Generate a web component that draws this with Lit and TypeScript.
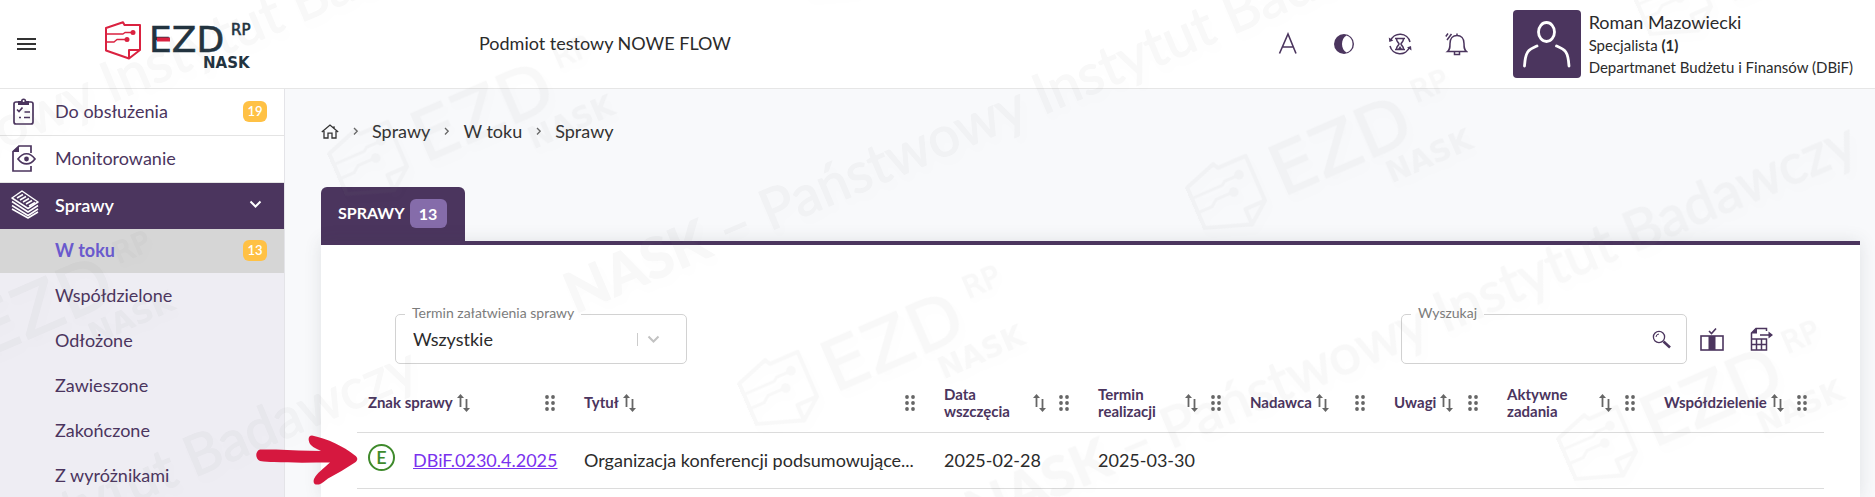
import { LitElement, html, svg, css } from "lit";
import { customElement, property } from "lit/decorators.js";
import { classMap } from "lit/directives/class-map.js";

/* ---------- brand mark ---------- */

const emblem = (mono: boolean) => {
  const red = mono ? "#808080" : "#da2240";
  return svg`
    <g fill="none" stroke=${red} stroke-width="2" stroke-linejoin="round">
      <path d="M1 7 L18 1.200 L19.500 4 L35 4 L35 29 L24 37.500 L1 29.500 Z"/>
      <path d="M24 37 V29 H34.500"/>
      <path d="M1 13 H18 L20 11.500 H27 M1 21 H9 L12 18.500 H21" stroke-width="1.500"/>
      <circle cx="28" cy="11.500" r="1.500" fill=${red}/>
      <circle cx="22" cy="18.500" r="1.500" fill=${red}/>
    </g>`;
};

const brand = (mono: boolean) => {
  const ink = mono ? "#808080" : "#22333f";
  return svg`
    ${emblem(mono)}
    <g fill=${ink} font-family="'DejaVu Sans', Verdana, sans-serif">
      <text x="44" y="31" font-size="36" stroke=${ink} stroke-width=".6">EZD</text>
      <text x="126" y="14" font-size="15" stroke=${ink} stroke-width=".6">RP</text>
      <text x="98" y="47" font-size="15" font-weight="700">NASK</text>
    </g>`;
};

/* ---------- icons ---------- */

const icons = {
  menu: svg`<path d="M0 2h19M0 7h19M0 12h19" stroke="#333" stroke-width="1.800"/>`,
  clipboard: svg`<g fill="none" stroke="currentColor" stroke-width="1.700">
      <rect x="3" y="5" width="19" height="22" rx="2"/>
      <path d="M6 12.500l2 2 3.500-4M13.500 15H19M8 20.500h2M13 20.500h6"/></g>
    <path d="M7 4h3a2.600 2.600 0 0 1 5.200 0H18v4H7z" fill="currentColor"/>
    <circle cx="12.600" cy="4" r="1" fill="#fff"/>`,
  monitor: svg`<g fill="none" stroke="currentColor" stroke-width="1.700">
      <path d="M20 9V2H8L2 7.500V27h18v-5"/>
      <path d="M7 15c5-7 12-7 17 0-5 6.500-12 6.500-17 0z"/></g>
    <circle cx="15.500" cy="15" r="2.400" fill="currentColor"/><path d="M8 1.500V8H1.500z" fill="currentColor"/>`,
  stack: svg`<g fill="none" stroke="currentColor" stroke-width="1.500" stroke-linejoin="round">
      <path d="M11 1L27 12 17 18.500 1 8z"/>
      <path d="M6 8l6-3.500M9 10l6-3.500M12 12l6-3.500M15 14l6-3.500M18 16l6-3.500" stroke-width="1.600"/>
      <path d="M1 11.500L17 22l10-6.500M1 15.500L17 25.500l10-6.500M1 19l16 9 10-6"/></g>`,
  chevronDown: svg`<path d="M1.500 1.500l5 5 5-5" fill="none" stroke="currentColor" stroke-width="2"/>`,
  chevronRight: svg`<path d="M1 1l3.200 3.200L1 7.500" fill="none" stroke="#666" stroke-width="1.300"/>`,
  home: svg`<path d="M.8 8L9 1l8.200 7M3 7v7h4V9.200h4V14h4V7M13 2.200V4" fill="none" stroke="#333" stroke-width="1.300"/>`,
  letter: svg`<path d="M3.500 21.500L12 2l8 19.500M6.500 15h11" fill="none" stroke="currentColor" stroke-width="1.600"/>`,
  contrast: svg`<circle cx="12" cy="12" r="10" fill="currentColor"/><path d="M14.500 3.500a9 9 0 0 1 0 17c-6-3-6-14 0-17z" fill="#fff"/>`,
  session: svg`<g fill="none" stroke="currentColor" stroke-width="1.500">
      <path d="M2.500 9A10.200 10.200 0 0 1 22 10M21.500 15A10.200 10.200 0 0 1 2 14"/>
      <path d="M7 6.500h10M7 17.500h10M8.500 6.500c0 4 2.500 4 2.500 5.500s-2.500 1.500-2.500 5.500M15.500 6.500c0 4-2.500 4-2.500 5.500s2.500 1.500 2.500 5.500"/></g>
    <path d="M.8 5.500l.5 4.500 4-1.500zM23.500 18.500l-.5-4.500-4 1.500zM10 17l2-3 2 3z" fill="currentColor"/>`,
  bell: svg`<g fill="none" stroke="currentColor" stroke-width="1.500">
      <path d="M3.500 19.500c2.500-2 2.500-4 2.500-8 0-5 3-8 7-8s7 3 7 8c0 4 0 6 2.500 8zM13 3.500V1.500M10.500 20v2.500h5V20"/>
      <path d="M1.800 4.500L4 1.500M3 8l4.500-6"/></g>`,
  person: svg`<g fill="none" stroke="#fff" stroke-width="2.800" stroke-linecap="round">
      <ellipse cx="33.500" cy="22" rx="8" ry="9.500"/><path d="M24 36c-9 4-11.500 5-12.500 20M43.500 36c9 4 11.500 5 12.500 20"/></g>`,
  search: svg`<circle cx="7" cy="7" r="5.600" fill="none" stroke="currentColor" stroke-width="1.300"/>
    <path d="M4 7a3.200 3.200 0 0 1 3-3" fill="none" stroke="currentColor" stroke-width="1"/>
    <path d="M11.500 11.500l6.500 6" stroke="currentColor" stroke-width="2.500"/>`,
  columns: svg`<rect x="1" y="9" width="22" height="14" fill="none" stroke="currentColor" stroke-width="1.600"/>
    <path d="M8.500 9h7v14h-7z" fill="currentColor"/><path d="M9 4l2.500 2.500L16 1.500" fill="none" stroke="currentColor" stroke-width="1.600"/>`,
  exportSheet: svg`<g fill="none" stroke="currentColor" stroke-width="1.500">
      <path d="M1.500 12V6L6 1.500h10.500V4M10 8h11M1.500 12h15v11h-15zM1.500 17.500h15M6.500 12v11M11.500 12v11"/></g>
    <path d="M1 6.500h6V1zM18.500 4.500L23 8l-4.500 3.500z" fill="currentColor"/>`,
  sort: svg`<path d="M3.500 13V2M9.500 5v11" stroke="#666" stroke-width="1.800"/>
    <path d="M0 4l3.500-4L7 4zM6 14l3.500 4 3.500-4z" fill="#666"/>`,
  grip: svg`<g fill="#666">${[2, 8, 14].map(
    (y) => svg`<circle cx="2" cy=${y} r="1.900"/><circle cx="8" cy=${y} r="1.900"/>`
  )}</g>`,
  pointer: svg`<path d="M4 14.500C-1 16-1 24 4 26c5 .8 9 1 14 1 18 1 38 .5 56 .5C67 34 61 38 58 44c-1 3 0 5 2 5.500h3c3-1 6-4 9-6 9-5 18-10 27-16 3-2 3-5 0-7C87 11 72 4 56 .5c-3 0-4 3-3 6 1 4 5 6 9 8l3 1.500C50 16 35 15 20 14.500z" fill="#d6183f"/>`,
};

const icon = (name: keyof typeof icons, w: number, h: number) =>
  html`<svg width=${w} height=${h} viewBox="0 0 ${w} ${h}" aria-hidden="true">${icons[name]}</svg>`;

const shared = css`
  *, *::before, *::after { box-sizing: border-box; }
  svg { display: block; flex: none; }
  button { font: inherit; color: inherit; background: none; border: 0; padding: 0; cursor: pointer; }
`;

/* ---------- top bar ---------- */

@customElement("top-bar")
class TopBar extends LitElement {
  static styles = [shared, css`
    :host { display: flex; align-items: center; height: 89px; padding: 0 22px 0 17px; background: #fff; border-bottom: 1px solid #e6e6e6; }
    .logo { margin: 4px 0 0 69px; }
    .entity { flex: 1; margin-left: 222px; padding-bottom: 2px; }
    .tools { display: flex; gap: 32px; margin-right: 45px; color: #4b355e; }
    .user { display: flex; align-items: center; gap: 8px; }
    .avatar { background: #4b355e; border-radius: 4px; }
    .name { font-size: 18px; line-height: 24px; }
    .info { font-size: 15px; line-height: 22px; }
  `];
  render() {
    return html`
      <button aria-label="Menu">${icon("menu", 19, 14)}</button>
      <svg class="logo" width="152" height="50" viewBox="0 0 152 50" role="img" aria-label="EZD RP NASK">
        ${brand(false)}
        <path d="M52 18.500h13" stroke="#da2240" stroke-width="4"/>
      </svg>
      <div class="entity">Podmiot testowy NOWE FLOW</div>
      <div class="tools">
        <button aria-label="Rozmiar tekstu">${icon("letter", 24, 24)}</button>
        <button aria-label="Kontrast">${icon("contrast", 24, 24)}</button>
        <button aria-label="Sesja">${icon("session", 24, 24)}</button>
        <button aria-label="Powiadomienia">${icon("bell", 24, 24)}</button>
      </div>
      <div class="user">
        <div class="avatar">${icon("person", 68, 68)}</div>
        <div>
          <div class="name">Roman Mazowiecki</div>
          <div class="info">Specjalista <b>(1)</b></div>
          <div class="info">Departmanet Budżetu i Finansów (DBiF)</div>
        </div>
      </div>`;
  }
}

/* ---------- side navigation ---------- */

@customElement("side-nav")
class SideNav extends LitElement {
  static styles = [shared, css`
    :host { display: block; width: 285px; background: #eeedf3; border-right: 1px solid #e4e4e8; }
    a { display: flex; align-items: center; color: #4b355e; text-decoration: none; padding: 0 17px 2px 0; }
    .label { flex: 1; }
    .main { height: 47px; padding-left: 11px; background: #fff; border-bottom: 1px solid #e4e4e4; }
    .main .pic { width: 44px; }
    .open { background: #4b355e; border-color: #4b355e; color: #fff; padding-right: 22px; font-weight: 600; height: 46px; }
    .sub { height: 45px; padding-left: 55px; }
    .current { background: #d6d6d6; color: #6a5acd; font-weight: 700; height: 44px; }
    .badge { min-width: 24px; height: 21px; padding: 0 4px; border-radius: 6px; background: #ffc145; color: #fff; font-size: 13px; line-height: 21px; font-weight: 600; text-align: center; }
  `];
  render() {
    const subs = ["W toku", "Współdzielone", "Odłożone", "Zawieszone", "Zakończone", "Z wyróżnikami"];
    return html`<nav>
      <a class="main" href="#"><span class="pic">${icon("clipboard", 28, 29)}</span><span class="label">Do obsłużenia</span><span class="badge">19</span></a>
      <a class="main" href="#"><span class="pic">${icon("monitor", 28, 29)}</span><span class="label">Monitorowanie</span></a>
      <a class="main open" href="#"><span class="pic">${icon("stack", 28, 29)}</span><span class="label">Sprawy</span>${icon("chevronDown", 13, 9)}</a>
      ${subs.map((s, i) => html`<a class=${classMap({ sub: true, current: i === 0 })} href="#">
        <span class="label">${s}</span>${i === 0 ? html`<span class="badge">13</span>` : ""}</a>`)}
    </nav>`;
  }
}

/* ---------- cases table ---------- */

const columns = [
  { label: "Znak sprawy", width: 216 },
  { label: "Tytuł", width: 360 },
  { label: "Data wszczęcia", width: 154 },
  { label: "Termin realizacji", width: 152 },
  { label: "Nadawca", width: 144 },
  { label: "Uwagi", width: 113 },
  { label: "Aktywne zadania", width: 157 },
  { label: "Współdzielenie", width: 171 },
];
const total = columns.reduce((sum, c) => sum + c.width, 0);

const rows = [
  { kind: "E", sign: "DBiF.0230.4.2025", title: "Organizacja konferencji podsumowujące...", start: "2025-02-28", due: "2025-03-30" },
];

@customElement("cases-table")
class CasesTable extends LitElement {
  @property({ attribute: false }) rows: typeof rows = [];
  static styles = [shared, css`
    :host { display: block; }
    table { width: 100%; table-layout: fixed; border-collapse: collapse; }
    th, td { padding: 0 18px 0 11px; text-align: left; border-bottom: 1px solid #dcdcdc; white-space: nowrap; }
    th { height: 58px; font-size: 15px; line-height: 17px; color: #4b355e; font-weight: 700; white-space: normal; }
    td { height: 56px; padding-right: 0; padding-bottom: 1px; }
    .head { display: flex; align-items: center; gap: 4px; }
    .grip { margin-left: auto; padding-left: 9px; }
    .case { display: flex; align-items: center; gap: 18px; }
    .kind { flex: none; width: 27px; height: 27px; margin-bottom: 4px; border: 2px solid #3f8a2c; border-radius: 50%; color: #3f8a2c; font-weight: 600; line-height: 23px; text-align: center; }
    a { color: #7a32ee; }
  `];
  render() {
    return html`<table>
      <colgroup>${columns.map((c) => html`<col style="width:${(c.width / total) * 100}%">`)}</colgroup>
      <thead><tr>${columns.map((c) => html`<th scope="col"><div class="head">
        <span>${c.label}</span>
        <button aria-label="Sortuj: ${c.label}">${icon("sort", 13, 18)}</button>
        <span class="grip">${icon("grip", 10, 16)}</span></div></th>`)}</tr></thead>
      <tbody>${this.rows.map((r) => html`<tr>
        <td><div class="case"><span class="kind">${r.kind}</span><a href="#">${r.sign}</a></div></td>
        <td>${r.title}</td><td>${r.start}</td><td>${r.due}</td><td></td><td></td><td></td><td></td>
      </tr>`)}</tbody>
    </table>`;
  }
}

/* ---------- page ---------- */

@customElement("app-root")
class AppRoot extends LitElement {
  static styles = [shared, css`
    :host { display: flex; flex-direction: column; position: relative; height: 100vh; overflow: hidden; font: 18px/24px Lato, "Noto Sans", sans-serif; color: #2b2b2b; background: #f8f9fb; }
    .body { display: flex; flex: 1; min-height: 0; }
    main { flex: 1; min-width: 0; display: flex; flex-direction: column; padding: 30px 15px 0 36px; }
    .crumbs { display: flex; align-items: center; gap: 14px; color: #333; }
    .crumbs a { color: inherit; text-decoration: none; }
    .tabs { margin-top: 44px; display: flex; }
    .tab { display: flex; align-items: center; gap: 5px; height: 54px; padding: 0 18px 2px 17px; background: #4b355e; color: #fff; border-radius: 6px 6px 0 0; font-size: 16px; font-weight: 700; }
    .count { width: 37px; height: 29px; line-height: 29px; border-radius: 6px; background: #856caa; text-align: center; }
    .card { flex: 1; background: #fff; border-top: 4px solid #4b355e; box-shadow: 0 0 16px rgba(60, 70, 80, .13); padding: 69px 36px 0; }
    .filters { display: flex; align-items: center; padding: 0 50px 0 38px; margin-bottom: 10px; color: #4b355e; }
    .field { position: relative; height: 50px; border: 1px solid #d2d2d2; border-radius: 5px; display: flex; align-items: center; color: #2b2b2b; }
    .field label { position: absolute; left: 9px; top: -13px; padding: 0 7px; background: #fff; color: #7c7c7c; font-size: 14px; line-height: 22px; }
    .pick { width: 292px; padding-right: 26px; color: #c2c2c2; }
    .pick::after { content: ""; width: 1px; height: 13px; background: #ccc; order: 1; }
    .pick svg { order: 2; margin-left: 9px; }
    select { flex: 1; height: 48px; padding: 0 0 0 17px; border: 0; background: none; appearance: none; font: inherit; color: #2b2b2b; }
    .find { width: 286px; margin: 0 13px 0 auto; padding-right: 15px; }
    .find button { color: #4b355e; }
    input { flex: 1; min-width: 0; height: 48px; padding: 0 0 0 17px; border: 0; background: none; font: inherit; }
    .act { margin-right: 26px; }
    .act:last-child { margin-right: 0; }
    .mark { position: absolute; inset: 0; width: 100%; height: 100%; pointer-events: none; opacity: .058; overflow: hidden; }
    .mark g { filter: drop-shadow(4px 6px 4px rgba(128, 128, 128, .3)); }
    .mark g g { filter: none; }
    .pointer { position: absolute; left: 256px; top: 435px; pointer-events: none; }
  `];

  render() {
    const logos = [[322, 142], [1180, 176], [732, 372], [1551, 427], [784, -57], [1626, -18], [-118, 337]];
    const full = "– Państwowy Instytut Badawczy";
    const lines: [number, number, string, string][] = [
      [-357, 302, "NASK ", full],
      [575, 314, "NASK ", full],
      [976, 532, "NASK ", full],
      [5, 558, "", "Instytut Badawczy"],
    ];
    return html`
      <top-bar></top-bar>
      <div class="body">
        <side-nav></side-nav>
        <main>
          <nav class="crumbs" aria-label="Ścieżka">
            <a href="#" aria-label="Strona główna">${icon("home", 18, 15)}</a>${icon("chevronRight", 5, 9)}
            <a href="#">Sprawy</a>${icon("chevronRight", 5, 9)}
            <a href="#">W toku</a>${icon("chevronRight", 5, 9)}
            <span>Sprawy</span>
          </nav>
          <div class="tabs"><button class="tab">SPRAWY <span class="count">13</span></button></div>
          <section class="card">
            <div class="filters">
              <div class="field pick">
                <label for="term">Termin załatwienia sprawy</label>
                <select id="term"><option>Wszystkie</option></select>
                ${icon("chevronDown", 13, 9)}
              </div>
              <div class="field find">
                <label for="query">Wyszukaj</label>
                <input id="query" type="text">
                <button aria-label="Szukaj">${icon("search", 19, 19)}</button>
              </div>
              <button class="act" aria-label="Kolumny">${icon("columns", 24, 24)}</button>
              <button class="act" aria-label="Eksport">${icon("exportSheet", 24, 24)}</button>
            </div>
            <cases-table .rows=${rows}></cases-table>
          </section>
        </main>
      </div>
      <svg class="mark" aria-hidden="true"><g>
        ${logos.map(([x, y]) => svg`<g transform="translate(${x} ${y}) rotate(-23.5) scale(1.95)">${brand(true)}</g>`)}
        ${lines.map(([x, y, bold, rest]) => svg`<text transform="translate(${x} ${y}) rotate(-23)" xml:space="preserve" font-size="56" fill="#808080" stroke="#808080" stroke-width="1"><tspan font-weight="700">${bold}</tspan>${rest}</text>`)}
      </g></svg>
      <svg class="pointer" width="102" height="50" viewBox="0 0 102 50" aria-hidden="true">${icons.pointer}</svg>`;
  }
}
